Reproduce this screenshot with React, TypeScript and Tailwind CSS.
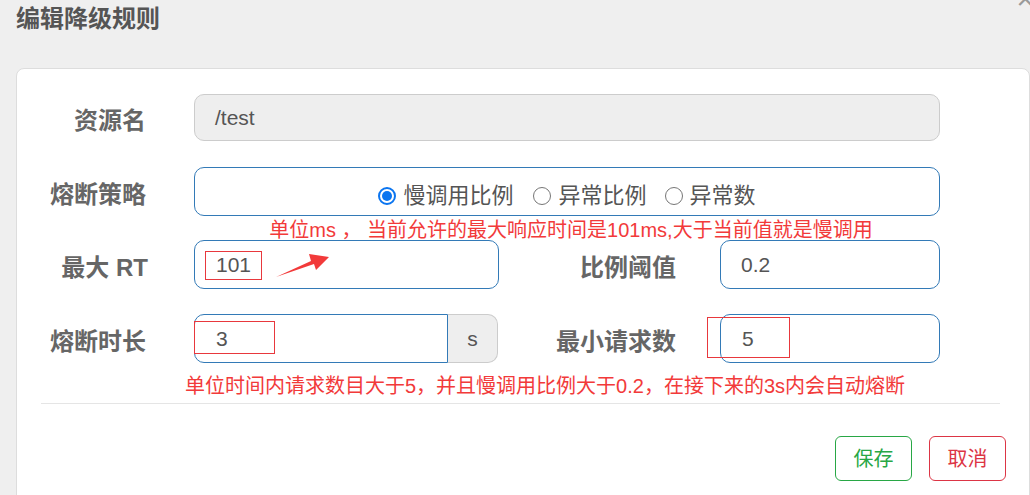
import React from "react";

const font = "font-['Liberation_Sans','Noto_Sans_CJK_SC',sans-serif]";

function Label({ text, w }: { text: string; w: string }) {
  return (
    <div className={`${w} shrink-0 pt-[6px] text-right text-[24px] font-bold leading-[30px] text-[#666]`}>
      {text}
    </div>
  );
}

function Radio({ checked, label }: { checked?: boolean; label: string }) {
  return (
    <label className="flex items-center gap-[7px]">
      {checked ? (
        <span className="flex h-[18px] w-[18px] items-center justify-center rounded-full border-2 border-[#0b75f0]">
          <span className="h-[10px] w-[10px] rounded-full bg-[#0b75f0]" />
        </span>
      ) : (
        <span className="h-[18px] w-[18px] rounded-full border border-[#767676]" />
      )}
      <span className="text-[22px] leading-[28px] text-[#555]">{label}</span>
    </label>
  );
}

export default function App() {
  return (
    <div className={`relative h-[495px] w-[1030px] overflow-hidden bg-[#efefef] ${font}`}>
      {/* close */}
      <span className="absolute right-[-4px] top-[-16px] text-[30px] leading-[30px] text-[#9a9a9a]">×</span>

      <h2 className="h-[68px] pl-4 pt-[3px] text-[24px] font-bold leading-[32px] text-[#555]">
        编辑降级规则
      </h2>

      <div className="ml-4 h-[440px] rounded-t-[8px] border border-[#ddd] bg-white pt-[25px]">
        {/* 资源名 */}
        <div className="flex h-[47px] items-center">
          <Label text="资源名" w="w-[129px]" />
          <div className="ml-[48px] flex h-full w-[746px] items-center rounded-[10px] border border-[#ccc] bg-[#eee] pl-[20px] text-[21px] text-[#555]">
            /test
          </div>
        </div>

        {/* 熔断策略 */}
        <div className="mt-[26px] flex h-[49px] items-center">
          <Label text="熔断策略" w="w-[129px]" />
          <div className="ml-[48px] flex h-full w-[746px] items-center justify-center rounded-[10px] border border-[#337ab7] pt-[8px]">
            <div className="flex items-center">
              <Radio checked label="慢调用比例" />
              <div className="ml-[20px]">
                <Radio label="异常比例" />
              </div>
              <div className="ml-[18px]">
                <Radio label="异常数" />
              </div>
            </div>
          </div>
        </div>

        <div className="ml-[181px] h-[24px] w-[746px] text-center text-[20px] leading-[28px] text-[#f23a3a]">
          单位ms ， 当前允许的最大响应时间是101ms,大于当前值就是慢调用
        </div>

        {/* 最大 RT / 比例阈值 */}
        <div className="flex h-[49px] items-center">
          <Label text="最大 RT" w="w-[131px]" />
          <div className="relative ml-[46px] flex h-full w-[305px] items-center rounded-[10px] border border-[#337ab7] pl-[21px] text-[21px] text-[#555]">
            101
            <span className="absolute left-[10px] top-[10px] h-[29px] w-[57px] border border-[#e8383d]" />
            <svg className="absolute left-0 top-0" width="150" height="48" viewBox="0 0 150 48">
              <polygon points="81,36 116,20 114,13 134,16 121,29 119,23" fill="#f23a3a" />
            </svg>
          </div>
          <Label text="比例阈值" w="w-[177px]" />
          <div className="ml-[44px] flex h-full w-[220px] items-center rounded-[10px] border border-[#337ab7] pl-[20px] text-[21px] text-[#555]">
            0.2
          </div>
        </div>

        {/* 熔断时长 / 最小请求数 */}
        <div className="mt-[25px] flex h-[49px] items-center">
          <Label text="熔断时长" w="w-[129px]" />
          <div className="ml-[48px] flex h-full w-[304px]">
            <div className="relative flex h-full w-[254px] items-center rounded-l-[10px] border border-[#337ab7] pl-[21px] text-[21px] text-[#555]">
              3
              <span className="absolute left-[-1px] top-[6px] h-[33px] w-[81px] border border-[#e8383d]" />
            </div>
            <div className="flex h-full w-[50px] items-center justify-center rounded-r-[10px] border border-l-0 border-[#ccc] bg-[#eee] text-[21px] text-[#555]">
              s
            </div>
          </div>
          <Label text="最小请求数" w="w-[178px]" />
          <div className="relative ml-[44px] flex h-full w-[220px] items-center rounded-[10px] border border-[#337ab7] pl-[21px] text-[21px] text-[#555]">
            5
            <span className="absolute left-[-14px] top-[2px] h-[41px] w-[83px] border border-[#e8383d]" />
          </div>
        </div>

        <div className="mt-[12px] ml-[168px] text-[20px] leading-[22px] text-[#f23a3a]">
          单位时间内请求数目大于5，并且慢调用比例大于0.2，在接下来的3s内会自动熔断
        </div>

        <div className="ml-[24px] mt-[6px] w-[959px] border-t border-[#e5e5e5]" />

        {/* footer */}
        <div className="mt-[32px] flex justify-end gap-[17px] pr-[23px]">
          <button className="h-[45px] w-[77px] rounded-[6px] border border-[#28a745] text-[20px] text-[#28a745]">
            保存
          </button>
          <button className="h-[45px] w-[77px] rounded-[6px] border border-[#dc3545] text-[20px] text-[#dc3545]">
            取消
          </button>
        </div>
      </div>
    </div>
  );
}
